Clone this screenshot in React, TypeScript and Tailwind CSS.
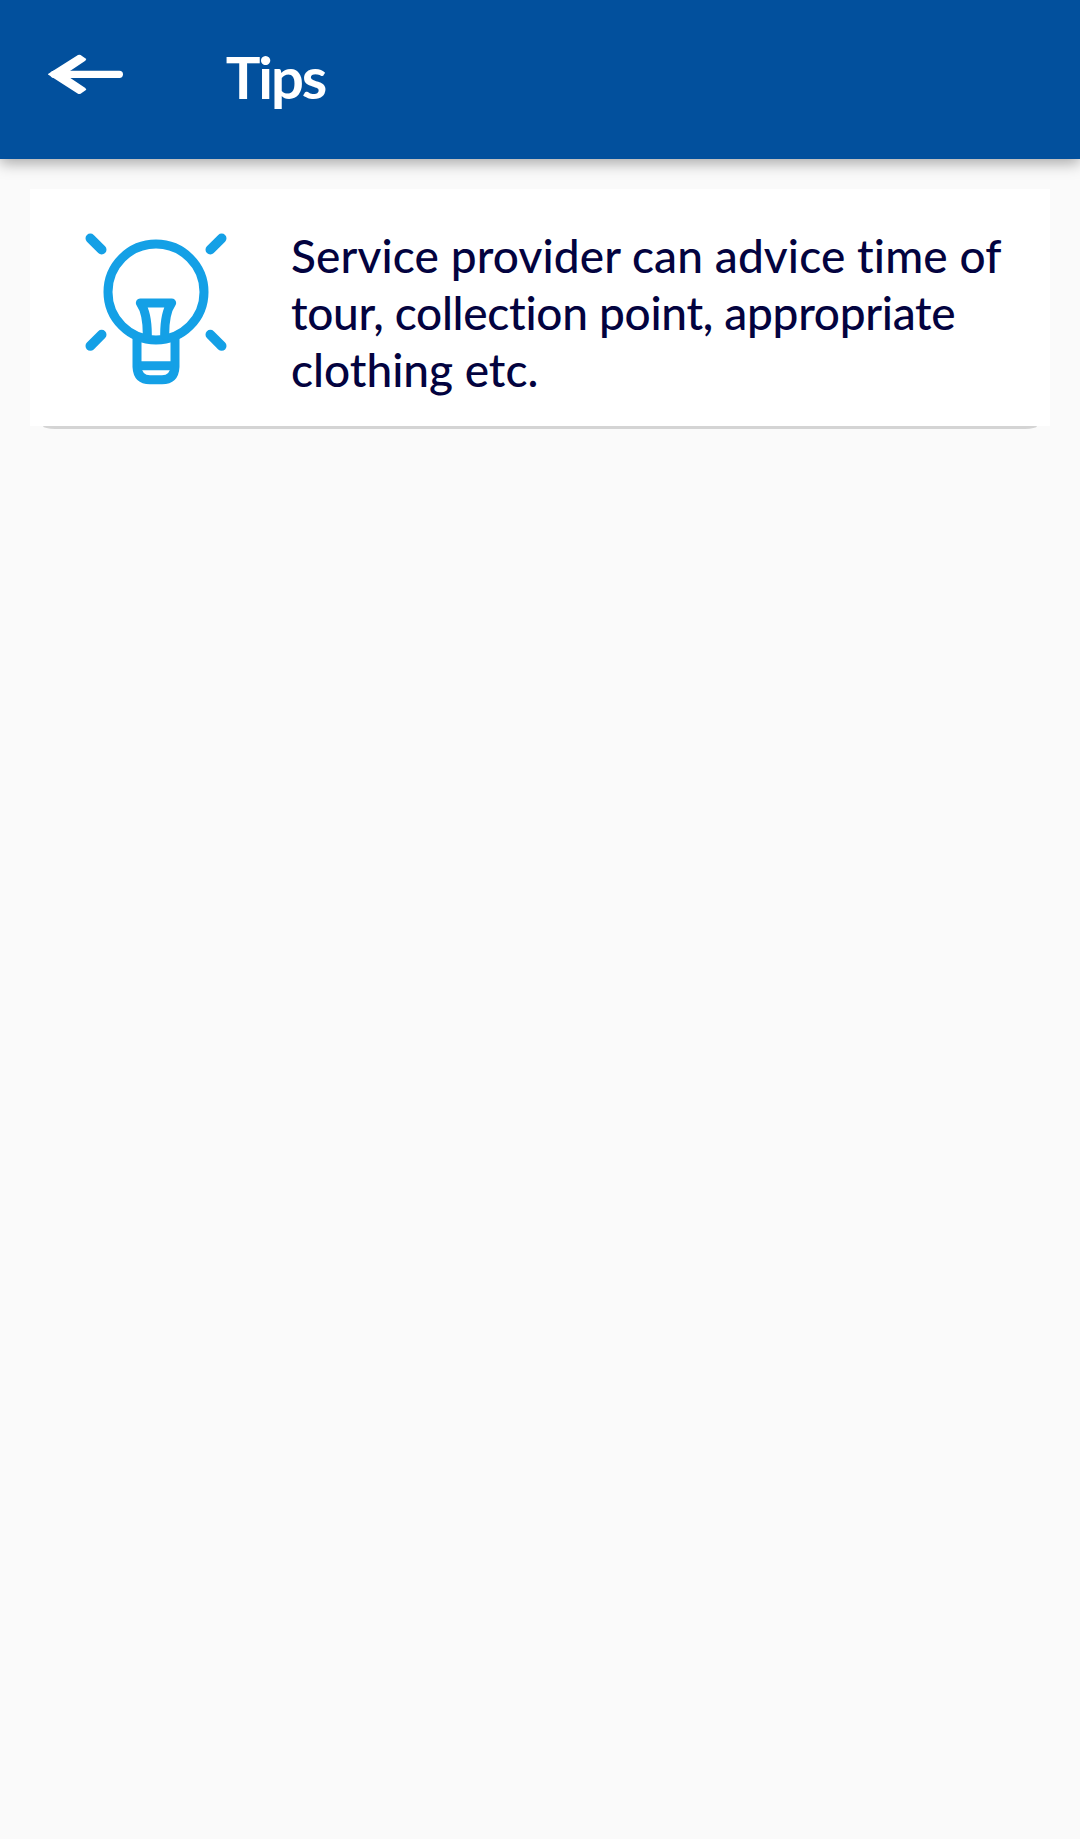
type TipLine = { text: string; className: string };

const tipLines: TipLine[] = [
  { text: 'Service provider can advice time of', className: 'tracking-[0.12px]' },
  { text: 'tour, collection point, appropriate', className: 'tracking-[-0.3px]' },
  { text: 'clothing etc.', className: 'tracking-[0px]' },
];

function BackArrow() {
  return (
    <svg viewBox="0 0 230 126" className="w-[76.67px] h-[42px]" fill="none" stroke="white">
      <path d="M18 64H214" strokeWidth="22" strokeLinecap="round" />
      <path d="M-1 64L90 6Q96 3 102 9L115 18L112 23L66 54V74L112 105L115 110L102 119Q96 125 90 122Z" fill="white" stroke="none" />
    </svg>
  );
}

function BulbIcon() {
  return (
    <svg viewBox="0 0 510 540" className="w-[170px] h-[180px] shrink-0" fill="none" stroke="#14a0e6" strokeWidth="27" strokeLinecap="round" strokeLinejoin="round">
      <circle cx="258" cy="216" r="144" />
      <path d="M61 55L95 89M455 55L421 89M61 378L95 344M455 378L421 344" strokeWidth="29" />
      <path d="M232 345C232 305 226 270 211 249H305C290 270 284 305 284 345" />
      <path d="M201 350V440Q203 479 240 479H276Q313 479 315 440V350" />
      <path d="M205 437H311" strokeLinecap="butt" />
    </svg>
  );
}

export default function App() {
  return (
    <div className="min-h-[1839px] w-full bg-[#fafafa] font-['Lato',sans-serif]">
      <header className="flex h-[159px] bg-[#02509d] pl-12 shadow-[0_4px_14px_rgba(0,0,0,0.34)]">
        <button className="mt-[53px] h-[42px]" aria-label="Back">
          <BackArrow />
        </button>
        <h1 className="mt-[43px] ml-[101px] text-[58px] leading-[68px] font-bold tracking-[-2px] text-white">Tips</h1>
      </header>
      <main className="px-[30px] pt-[30px]">
        <div className="flex h-[237px] bg-white pl-10">
          <div className="mt-[31px]">
            <BulbIcon />
          </div>
          <p className="mt-[38px] ml-[51px] text-[46px] leading-[57px] font-medium text-[#03033f] [font-variant-ligatures:none]">
            {tipLines.map(line => (
              <span key={line.text} className={`block whitespace-nowrap ${line.className}`}>{line.text}</span>
            ))}
          </p>
        </div>
        <div className="mx-[13px] h-[3px] bg-[#d4d4d4] [border-radius:0_0_12px_12px/0_0_3px_3px]" />
      </main>
    </div>
  );
}
